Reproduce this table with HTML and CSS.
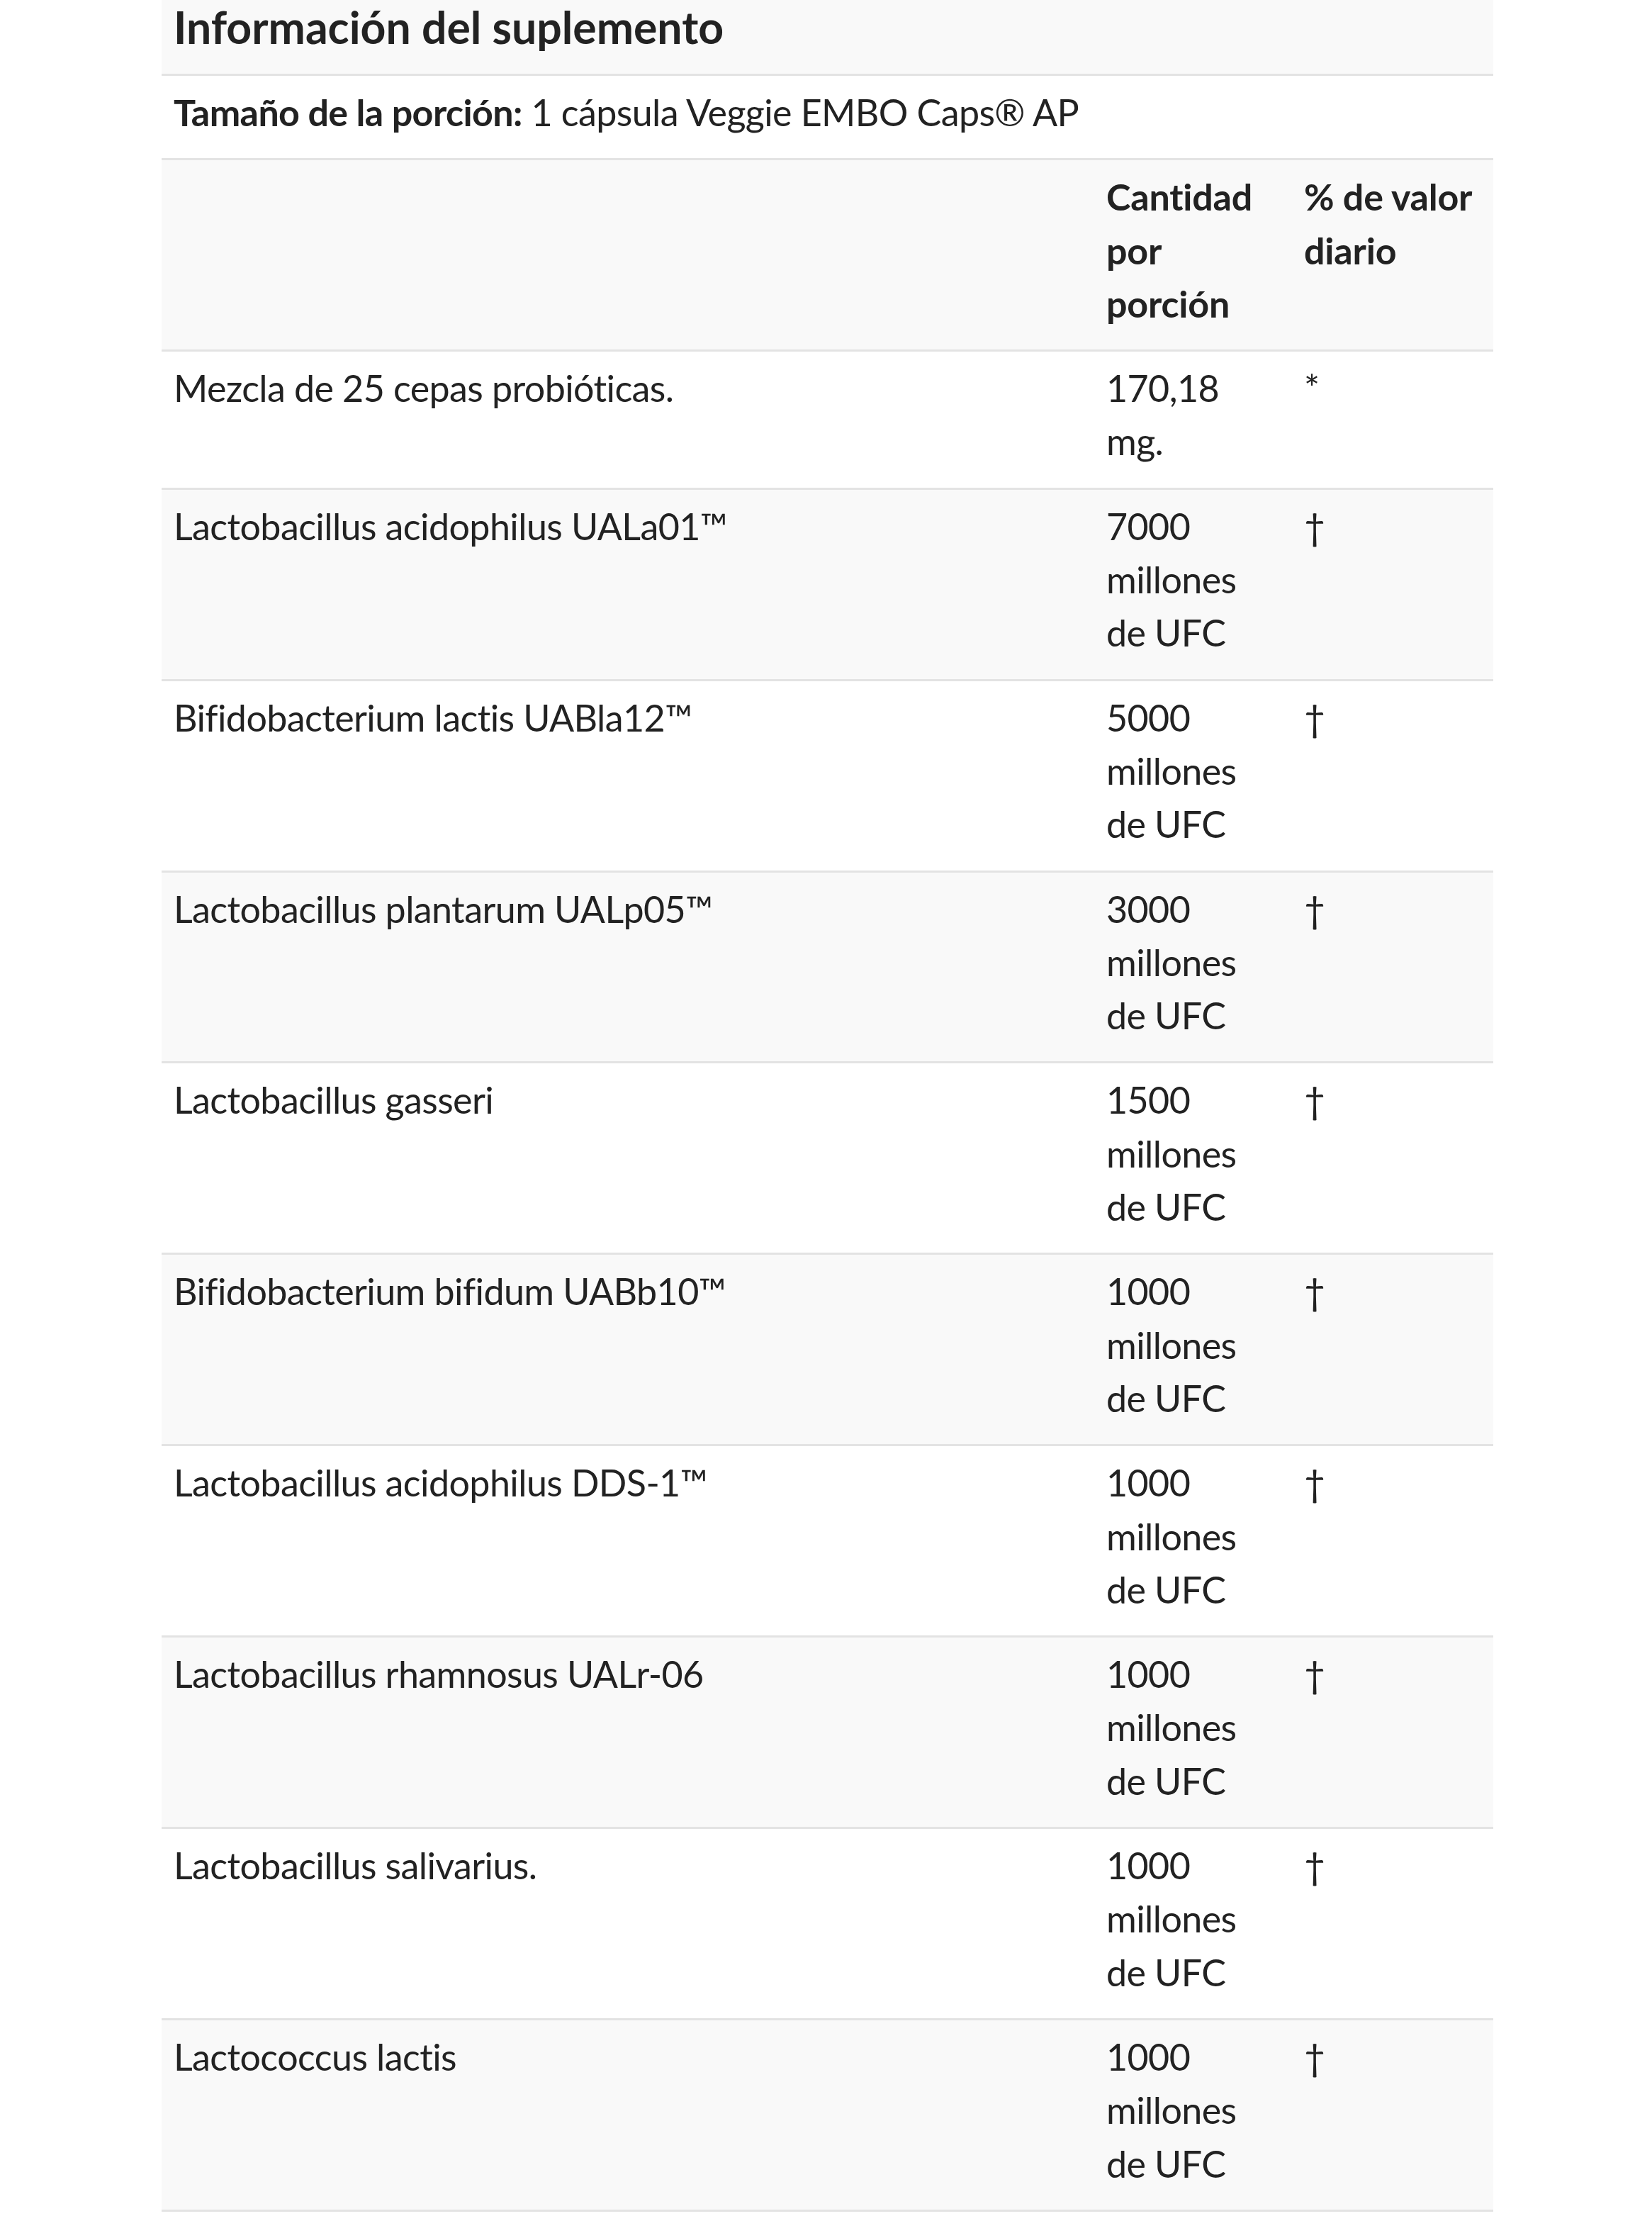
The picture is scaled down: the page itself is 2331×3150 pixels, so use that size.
FILE: index.html
```html
<!DOCTYPE html>
<html lang="es">
<head>
<meta charset="utf-8">
<title>Información del suplemento</title>
<link rel="stylesheet" href="styles.css">
</head>
<body>
<main class="page">
  <table class="facts">
    <colgroup>
      <col class="col-name">
      <col class="col-amount">
      <col class="col-dv">
    </colgroup>
    <thead>
      <tr class="title-row">
        <th colspan="3" class="title">Información del suplemento</th>
      </tr>
      <tr class="serving-row">
        <td colspan="3"><strong>Tamaño de la porción:</strong> 1 cápsula Veggie EMBO Caps® AP</td>
      </tr>
      <tr class="head-row">
        <th></th>
        <th>Cantidad por porción</th>
        <th>% de valor diario</th>
      </tr>
    </thead>
    <tbody>
      <tr><td>Mezcla de 25 cepas probióticas.</td><td>170,18 mg.</td><td class="mark">*</td></tr>
      <tr><td>Lactobacillus acidophilus UALa01™</td><td>7000 millones de UFC</td><td>†</td></tr>
      <tr><td>Bifidobacterium lactis UABla12™</td><td>5000 millones de UFC</td><td>†</td></tr>
      <tr><td>Lactobacillus plantarum UALp05™</td><td>3000 millones de UFC</td><td>†</td></tr>
      <tr><td>Lactobacillus gasseri</td><td>1500 millones de UFC</td><td>†</td></tr>
      <tr><td>Bifidobacterium bifidum UABb10™</td><td>1000 millones de UFC</td><td>†</td></tr>
      <tr><td>Lactobacillus acidophilus DDS-1™</td><td>1000 millones de UFC</td><td>†</td></tr>
      <tr><td>Lactobacillus rhamnosus UALr-06</td><td>1000 millones de UFC</td><td>†</td></tr>
      <tr><td>Lactobacillus salivarius.</td><td>1000 millones de UFC</td><td>†</td></tr>
      <tr><td>Lactococcus lactis</td><td>1000 millones de UFC</td><td>†</td></tr>
      <tr><td>Streptococcus thermophilus</td><td>1000 millones de UFC</td><td>†</td></tr>
    </tbody>
  </table>
</main>
</body>
</html>
```

FILE: styles.css
```css
html, body {
  margin: 0;
  padding: 0;
  background: #ffffff;
}

body {
  font-family: Lato, "Open Sans", "Liberation Sans", sans-serif;
  color: #222222;
  overflow: hidden;
}

.page {
  padding-left: 228px;
  width: 1879px;
}

.facts {
  width: 1879px;
  border-collapse: collapse;
  table-layout: fixed;
  font-size: 52px;
  line-height: 75.3px;
  letter-spacing: -0.6px;
}

.col-name { width: 1316px; }
.col-amount { width: 279px; }
.col-dv { width: 284px; }

.facts th,
.facts td {
  padding: 14px 17px 27px 17px;
  text-align: left;
  vertical-align: top;
  border-bottom: 3px solid #e3e3e3;
}

.facts th {
  font-weight: 700;
  letter-spacing: -0.2px;
}

.title-row {
  background: #f9f9f9;
}

.facts .title {
  font-size: 62.5px;
  line-height: 75px;
  letter-spacing: 0;
  padding-top: 0;
  padding-bottom: 29px;
}

.serving-row {
  background: #ffffff;
}

.serving-row strong {
  font-weight: 700;
}

.head-row {
  background: #f9f9f9;
}

.facts tbody tr:nth-child(odd) {
  background: #ffffff;
}

.facts tbody tr:nth-child(even) {
  background: #f9f9f9;
}
```
